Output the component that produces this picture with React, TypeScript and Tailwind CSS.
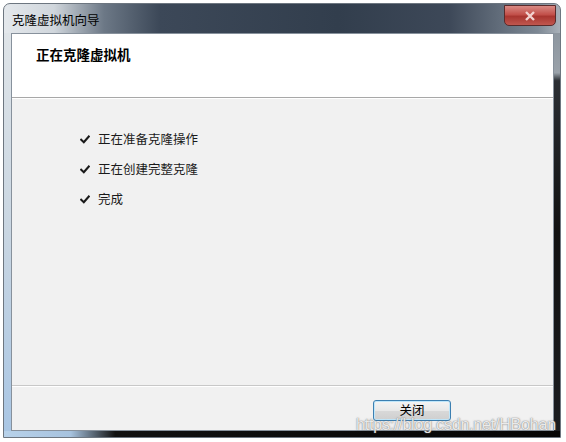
import React from "react";

const steps = ["正在准备克隆操作", "正在创建完整克隆", "完成"];

function Check() {
  return (
    <svg viewBox="0 0 10 9" className="w-[10px] h-[9px]" fill="none" stroke="#1a1a1a" strokeWidth={2.1} strokeLinecap="square">
      <path d="M1.2 4.8 L3.8 7.2 L8.8 1.5" />
    </svg>
  );
}

export default function App() {
  return (
    <div className="w-[566px] h-[442px] bg-white relative overflow-hidden" style={{ fontFamily: '"Noto Sans CJK SC", "Noto Sans", sans-serif' }}>
      <div className="absolute left-[3px] top-[3px] w-[558px] h-[435px] rounded-t-[7px] border border-[#6d7680] flex flex-col bg-[linear-gradient(to_right,#e4e8ec_0%,#d0d6dc_9%,#6c7886_18%,#3c4858_28%,#323e4d_60%,#3d4858_80%,#7d8894_96%,#a9b1b9_100%)]">
        {/* title bar */}
        <div className="h-[29px] flex items-center pl-[8px] relative">
          <span className="text-[12.5px] text-black leading-none pt-[3px]">克隆虚拟机向导</span>
          <div className="absolute right-[4px] top-[1px] w-[52px] h-[21px] rounded-b-[5px] border border-[#5a2b2b] bg-[linear-gradient(to_bottom,#d98a84_0%,#c2504a_45%,#a93630_55%,#c0574f_100%)] flex items-center justify-center">
            <svg viewBox="0 0 12 10" className="w-[12px] h-[10px]" fill="none" stroke="#f3d3d0" strokeWidth={2.4}>
              <path d="M2 1 L10 9 M10 1 L2 9" />
            </svg>
          </div>
        </div>

        <div className="flex-1 flex">
          <div className="w-[7px] bg-[linear-gradient(to_bottom,#dfe4e8_0%,#c9d6e2_50%,#a9c6e4_100%)]" />
          <div className="flex-1 flex flex-col border border-[#87919c] bg-[#f1f1f1]">
            {/* header */}
            <div className="h-[64px] bg-white border-b border-[#a8a8a8] pl-[24px] pt-[7px]">
              <span className="text-[13.5px] font-bold text-black">正在克隆虚拟机</span>
            </div>
            <div className="border-t border-white" />

            {/* steps */}
            <div className="flex flex-col gap-[11px] pl-[68px] pt-[31px]">
              {steps.map((s) => (
                <div key={s} className="flex items-center h-[19px]">
                  <Check />
                  <span className="ml-[8px] text-[12.5px] text-[#1a1a1a]">{s}</span>
                </div>
              ))}
            </div>

            <div className="flex-1" />

            {/* footer */}
            <div className="border-t border-[#c8c8c8]" />
            <div className="border-t border-white h-[44px] flex items-start justify-end pr-[102px] pt-[13px]">
              <button className="w-[78px] h-[21px] rounded-[3px] border border-[#3c7fb1] bg-[linear-gradient(to_bottom,#f4f4f4_0%,#e8e8e8_50%,#d8d8d8_55%,#cfcfcf_100%)] shadow-[inset_0_0_0_1px_#bfe6fa] text-[12.5px] text-black leading-none flex items-center justify-center">
                关闭
              </button>
            </div>
          </div>
          <div className="w-[6px] bg-[linear-gradient(to_bottom,#8d969f_0%,#9aa2aa_10%,#2a2e33_12%,#111_50%,#1b1d20_100%)]" />
        </div>
        <div className="h-[6px] bg-[linear-gradient(to_right,#b8d2ea_0%,#a6c2de_12%,#111_20%,#050505_100%)]" />
      </div>

      {/* watermark */}
      <div className="absolute left-[356px] top-[417px] whitespace-nowrap text-[16px] tracking-[-0.2px] leading-none text-white/85 [text-shadow:0_0_1px_rgba(90,90,90,0.9),0_0_2px_rgba(120,120,120,0.5)]" style={{ fontFamily: '"Liberation Sans", Arial, sans-serif' }}>
        https://blog.csdn.net/HBohan
      </div>
    </div>
  );
}
